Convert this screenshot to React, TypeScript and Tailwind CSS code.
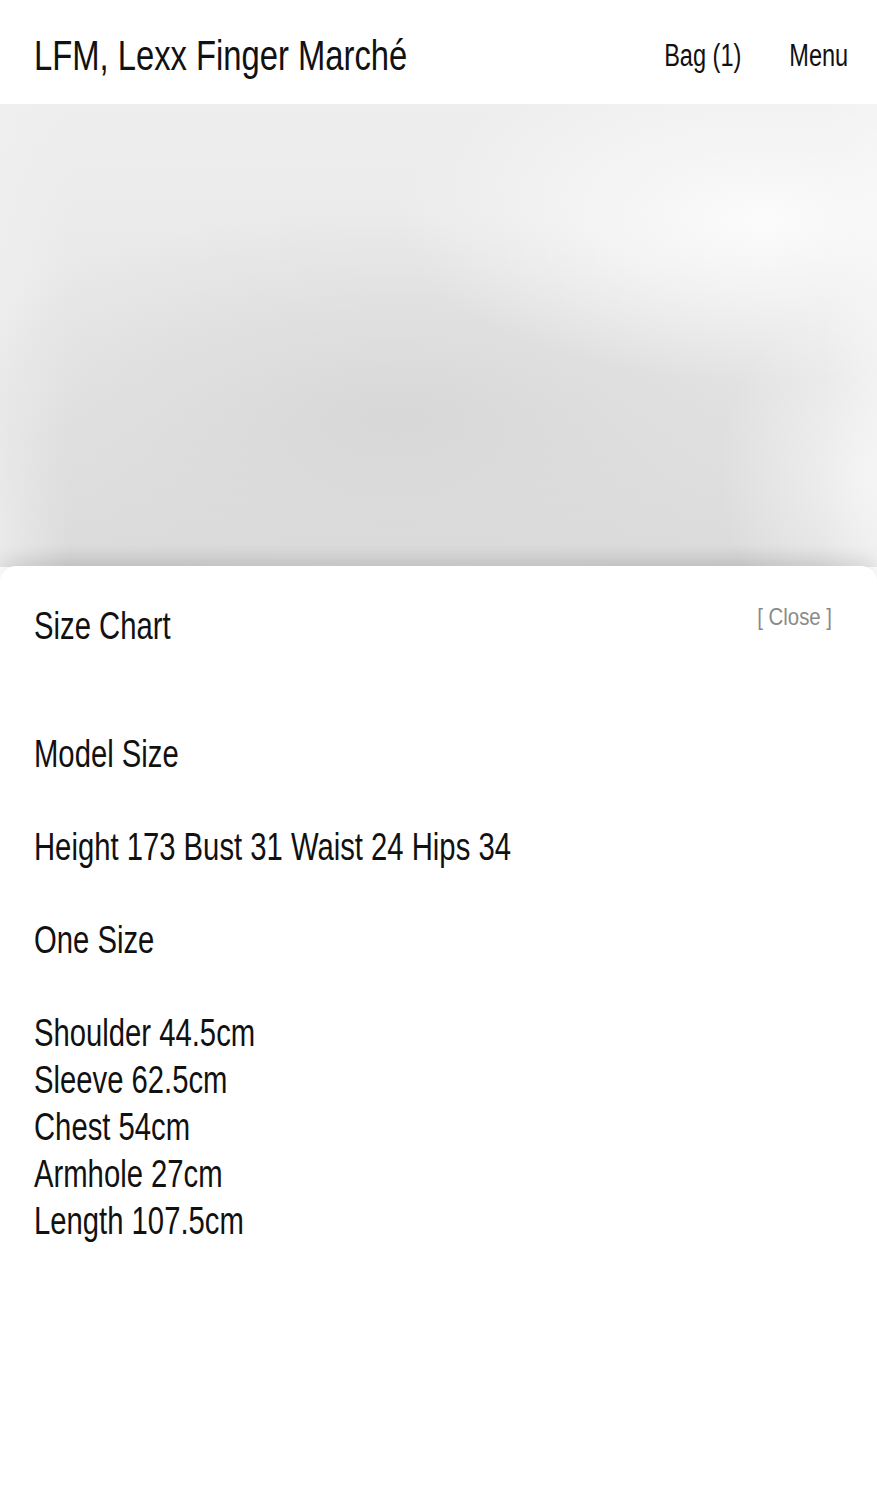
import React from 'react';

const font = "font-['Liberation_Sans',Arial,sans-serif]";

const measurements = [
  'Shoulder 44.5cm',
  'Sleeve 62.5cm',
  'Chest 54cm',
  'Armhole 27cm',
  'Length 107.5cm',
];

// the reference face is a condensed grotesk; squeeze Liberation Sans to match
const Narrow: React.FC<{ children: React.ReactNode }> = ({ children }) => (
  <span className="inline-block origin-left scale-x-[0.75] whitespace-nowrap">{children}</span>
);

const App: React.FC = () => {
  return (
    <div className={`min-h-[1500px] bg-white text-[#111] ${font}`}>
      {/* Header */}
      <header className="h-[104px] flex items-center justify-between pl-[34px] pr-[29px] pt-[7px] bg-white">
        <h1 className="text-[42px] leading-none inline-block origin-left scale-x-[0.78] whitespace-nowrap">
          LFM, Lexx Finger Marché
        </h1>
        <nav className="flex items-center gap-[63px] text-[31px] leading-none origin-right scale-x-[0.76] whitespace-nowrap">
          <span>Bag (1)</span>
          <span>Menu</span>
        </nav>
      </header>

      {/* Product image (blurred) */}
      <div className="h-[463px] bg-[#e8e8e8] bg-[radial-gradient(ellipse_42%_35%_at_87%_25%,#fbfbfb_0%,rgba(251,251,251,0)_100%),radial-gradient(ellipse_18%_40%_at_100%_80%,rgba(245,245,245,0.9)_0%,rgba(245,245,245,0)_100%),radial-gradient(ellipse_55%_45%_at_45%_68%,#d8d8d8_0%,rgba(216,216,216,0)_100%),linear-gradient(to_right,rgba(240,240,240,0.7)_0%,rgba(240,240,240,0)_8%,rgba(240,240,240,0)_94%,rgba(245,245,245,0.6)_100%),linear-gradient(to_bottom,#eeeeee_0%,#e6e6e6_60%,#dcdcdc_95%,#cecece_100%)]" />

      {/* Size chart sheet */}
      <section className="relative z-10 -mt-[1px] min-h-[934px] rounded-t-[16px] bg-white shadow-[0_-6px_18px_rgba(0,0,0,0.08)] pl-[34px] pr-[45px] pt-[36px] text-[39px] leading-[47px]">
        <div className="flex items-start justify-between">
          <h2><Narrow>Size Chart</Narrow></h2>
          <button className="text-[24px] leading-[30px] text-[#8a8a8a] inline-block origin-right scale-x-[0.85] whitespace-nowrap">
            [ Close ]
          </button>
        </div>

        <div className="mt-[81px] flex flex-col gap-[46px]">
          <p><Narrow>Model Size</Narrow></p>
          <p><Narrow>Height 173 Bust 31 Waist 24 Hips 34</Narrow></p>
          <p><Narrow>One Size</Narrow></p>
          <div>
            {measurements.map((m) => (
              <p key={m}><Narrow>{m}</Narrow></p>
            ))}
          </div>
        </div>
      </section>
    </div>
  );
};

export default App;
